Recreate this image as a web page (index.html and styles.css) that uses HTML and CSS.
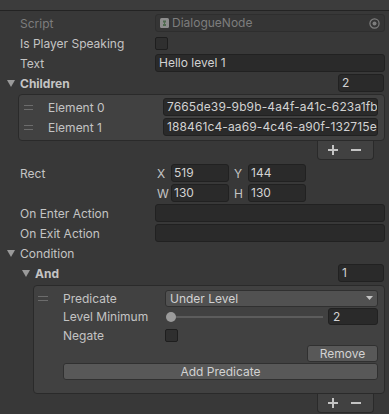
FILE: index.html
```html
<!DOCTYPE html>
<html>
<head>
<meta charset="utf-8">
<link rel="stylesheet" href="styles.css">
</head>
<body>
<div class="topbar"></div>
<div class="insp">
  <div class="row">
    <span class="lbl dis">Script</span>
    <div class="fld obj">
      <svg class="scr-ico" width="9" height="10" viewBox="0 0 9 10"><rect x="0" y="0" width="9" height="10" rx="1.5" fill="#8d8d8d"/><path d="M3 2.5h3v2h-1v1.5h1v2h-3v-2h1v-1.5h-1z" fill="#4f6a4f"/></svg>
      <span class="objtxt">DialogueNode</span>
      <svg class="pick" width="11" height="11" viewBox="0 0 11 11"><circle cx="5.5" cy="5.5" r="4.6" fill="none" stroke="#7e7e7e" stroke-width="1.2"/><circle cx="5.5" cy="5.5" r="2" fill="#7e7e7e"/></svg>
    </div>
  </div>
  <div class="row">
    <span class="lbl">Is Player Speaking</span>
    <span class="chk"></span>
  </div>
  <div class="row">
    <span class="lbl">Text</span>
    <div class="fld">Hello level 1</div>
  </div>
  <div class="row">
    <svg class="fold" width="8" height="7" viewBox="0 0 8 7"><polygon points="0,0 8,0 4,7" fill="#9a9a9a"/></svg>
    <span class="lbl b">Children</span>
    <div class="fld size">2</div>
  </div>
  <div class="list">
    <div class="el">
      <span class="handle"></span>
      <span class="ellbl">Element 0</span>
      <div class="fld elfld">7665de39-9b9b-4a4f-a41c-623a1fb</div>
    </div>
    <div class="el">
      <span class="handle"></span>
      <span class="ellbl">Element 1</span>
      <div class="fld elfld">188461c4-aa69-4c46-a90f-132715e</div>
    </div>
  </div>
  <div class="foot">
    <svg width="10" height="10" viewBox="0 0 10 10"><path d="M0 5h10M5 0v10" stroke="#c4c4c4" stroke-width="2"/></svg>
    <svg width="10" height="10" viewBox="0 0 10 10"><path d="M0 5h10" stroke="#c4c4c4" stroke-width="2"/></svg>
  </div>

  <div class="rect">
    <span class="lbl rectlbl">Rect</span>
    <div class="vecs">
      <div class="vrow">
        <span class="vl">X</span><div class="fld vf">519</div>
        <span class="vl vl2">Y</span><div class="fld vf">144</div>
      </div>
      <div class="vrow">
        <span class="vl">W</span><div class="fld vf">130</div>
        <span class="vl vl2">H</span><div class="fld vf">130</div>
      </div>
    </div>
  </div>
  <div class="row">
    <span class="lbl">On Enter Action</span>
    <div class="fld"></div>
  </div>
  <div class="row">
    <span class="lbl">On Exit Action</span>
    <div class="fld"></div>
  </div>
  <div class="row">
    <svg class="fold" width="8" height="7" viewBox="0 0 8 7"><polygon points="0,0 8,0 4,7" fill="#9a9a9a"/></svg>
    <span class="lbl">Condition</span>
  </div>
  <div class="row sub">
    <svg class="fold" width="8" height="7" viewBox="0 0 8 7"><polygon points="0,0 8,0 4,7" fill="#9a9a9a"/></svg>
    <span class="lbl b">And</span>
    <div class="fld size">1</div>
  </div>
  <div class="ibox">
    <div class="irow">
      <span class="handle ih"></span>
      <span class="ilbl">Predicate</span>
      <div class="popup"><span>Under Level</span><svg width="7" height="4" viewBox="0 0 7 4"><polygon points="0,0 7,0 3.5,4" fill="#c4c4c4"/></svg></div>
    </div>
    <div class="irow">
      <span class="ilbl">Level Minimum</span>
      <div class="slider"><span class="track"></span><span class="knob"></span></div>
      <div class="fld numf">2</div>
    </div>
    <div class="irow">
      <span class="ilbl">Negate</span>
      <span class="chk"></span>
    </div>
    <div class="brow">
      <div class="btn remove">Remove</div>
    </div>
    <div class="brow">
      <div class="btn addp">Add Predicate</div>
    </div>
  </div>
  <div class="foot">
    <svg width="10" height="10" viewBox="0 0 10 10"><path d="M0 5h10M5 0v10" stroke="#c4c4c4" stroke-width="2"/></svg>
    <svg width="10" height="10" viewBox="0 0 10 10"><path d="M0 5h10" stroke="#c4c4c4" stroke-width="2"/></svg>
  </div>
</div>
</body>
</html>
```

FILE: styles.css
```css
* { box-sizing: border-box; }
html, body { margin: 0; padding: 0; }
body {
  background: #383838;
  font-family: Inter, "Noto Sans", sans-serif;
  font-size: 12px;
  color: #c4c4c4;
  width: 389px;
  height: 414px;
  overflow: hidden;
}
.topbar {
  height: 11px;
  background: #3c3c3c;
  border-bottom: 1px solid #232323;
}
.insp { padding-top: 2px; }
.row {
  display: flex;
  align-items: center;
  height: 20px;
  padding-left: 20px;
}
.row.sub { padding-left: 35px; }
.fold {
  flex: 0 0 auto;
  margin-left: -13px;
  margin-right: 5px;
}
.lbl {
  flex: 0 0 135px;
  white-space: nowrap;
}
.row.sub .lbl { flex-basis: 120px; }
.lbl.dis { color: #7d7d7d; }
.b { font-weight: 700; }
.fld {
  flex: 1 1 auto;
  height: 18px;
  margin-right: 4px;
  background: #2a2a2a;
  border: 1px solid #212121;
  border-radius: 3px;
  color: #d2d2d2;
  padding: 0 3px;
  line-height: 16px;
  white-space: nowrap;
  overflow: hidden;
}
.fld.obj {
  display: flex;
  align-items: center;
  background: #353535;
  border-color: #2e2e2e;
  color: #7d7d7d;
  padding-left: 4px;
  padding-right: 4px;
}
.scr-ico { flex: 0 0 auto; margin-right: 3px; }
.objtxt { flex: 1 1 auto; }
.pick { flex: 0 0 auto; }
.chk {
  width: 13px;
  height: 13px;
  background: #2f2f2f;
  border: 1px solid #1e1e1e;
  border-radius: 2px;
}
.fld.size {
  flex: 0 0 46px;
  margin-left: auto;
  margin-right: 5px;
}
.list {
  margin: 1px 4px 0 18px;
  background: #414141;
  border: 1px solid #2a2a2a;
  border-radius: 4px;
  padding: 2px 0 3px;
}
.el {
  display: flex;
  align-items: center;
  height: 20px;
}
.handle {
  flex: 0 0 9px;
  height: 5px;
  margin-left: 5px;
  border-top: 1px solid #6c6c6c;
  border-bottom: 1px solid #6c6c6c;
}
.ellbl {
  flex: 0 0 auto;
  width: 115px;
  margin-left: 15px;
  white-space: nowrap;
}
.fld.elfld { margin-right: 6px; padding-left: 3px; letter-spacing: 0.12px; }
.foot {
  display: flex;
  align-items: center;
  justify-content: space-between;
  width: 57px;
  height: 19px;
  margin-left: auto;
  margin-right: 15px;
  padding: 0 12px 1px 10px;
  background: #414141;
  border: 1px solid #2a2a2a;
  border-top: none;
  border-radius: 0 0 4px 4px;
}
.rect {
  display: flex;
  align-items: flex-start;
  padding-left: 20px;
  margin-top: 3px;
}
.rectlbl { line-height: 21px; }
.vecs { flex: 1 1 auto; }
.vrow {
  display: flex;
  align-items: center;
  height: 20px;
}
.vl {
  flex: 0 0 16px;
  padding-left: 2px;
}
.vl2 { margin-left: 3px; }
.fld.vf {
  flex: 0 0 58px;
  margin-right: 0;
  padding-left: 2px;
}
.ibox {
  margin: 2px 4px 0 33px;
  background: #414141;
  border: 1px solid #2a2a2a;
  border-radius: 4px;
  padding: 3px 0 12px;
}
.irow {
  display: flex;
  align-items: center;
  height: 18px;
  padding-left: 29px;
  padding-right: 6px;
}
.irow + .irow { height: 19px; }
.handle.ih {
  flex: 0 0 10px;
  margin-left: -25px;
  margin-right: 15px;
}
.ilbl {
  flex: 0 0 102px;
  white-space: nowrap;
}
.popup {
  flex: 1 1 auto;
  height: 17px;
  display: flex;
  align-items: center;
  justify-content: space-between;
  padding: 0 4px 0 4px;
  background: #515151;
  border: 1px solid #303030;
  border-radius: 3px;
  color: #d2d2d2;
}
.slider {
  position: relative;
  flex: 0 0 158px;
  height: 18px;
}
.track {
  position: absolute;
  left: 6px;
  right: 0;
  top: 8px;
  height: 2px;
  background: #5c5c5c;
}
.knob {
  position: absolute;
  left: 1px;
  top: 4px;
  width: 10px;
  height: 10px;
  border-radius: 50%;
  background: #9b9b9b;
}
.fld.numf {
  flex: 0 0 50px;
  height: 17px;
  margin-left: 5px;
  margin-right: 0;
  padding-left: 4px;
}
.brow {
  display: flex;
  justify-content: flex-end;
  height: 18px;
  padding: 0 6px 0 29px;
}
.btn {
  height: 17px;
  background: #585858;
  border: 1px solid #303030;
  border-radius: 3px;
  color: #d2d2d2;
  text-align: center;
  line-height: 15px;
}
.remove { width: 71px; }
.addp { flex: 1 1 auto; }
```
